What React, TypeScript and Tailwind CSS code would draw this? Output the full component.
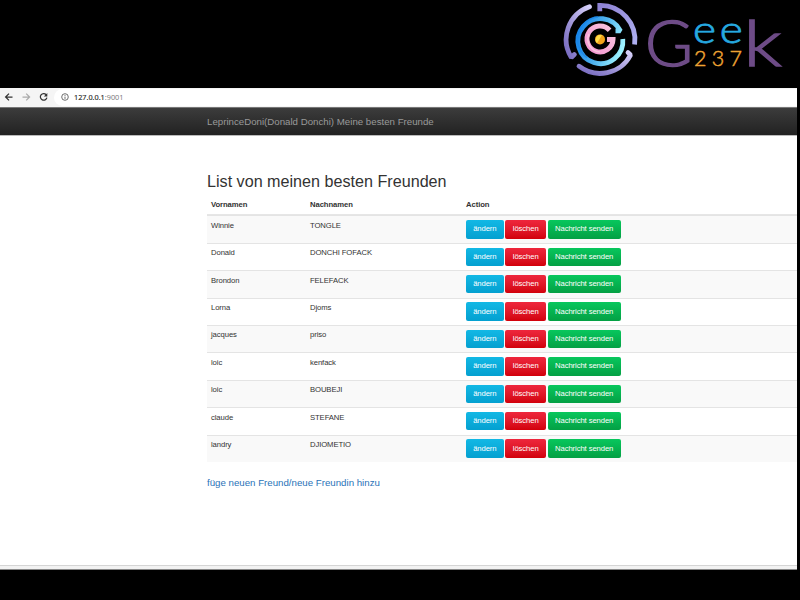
import React from "react";

const friends: [string, string][] = [
  ["Winnie", "TONGLE"],
  ["Donald", "DONCHI FOFACK"],
  ["Brondon", "FELEFACK"],
  ["Lorna", "Djoms"],
  ["jacques", "priso"],
  ["loic", "kenfack"],
  ["loic", "BOUBEJI"],
  ["claude", "STEFANE"],
  ["landry", "DJIOMETIO"],
];

function Emblem() {
  return (
    <svg width="80" height="80" viewBox="560 0 80 80" fill="none" className="shrink-0">
      <defs>
        <linearGradient id="violet" x1="0" y1="1" x2="1" y2="0">
          <stop offset="0" stopColor="#7467bd" />
          <stop offset="1" stopColor="#d6d0fa" />
        </linearGradient>
        <linearGradient id="violetDown" x1="0" y1="0" x2="1" y2="1">
          <stop offset="0" stopColor="#8e82d4" />
          <stop offset="1" stopColor="#aeb0f0" />
        </linearGradient>
        <linearGradient id="cyan" x1="0" y1=".3" x2="1" y2=".6">
          <stop offset="0" stopColor="#1a86e8" />
          <stop offset=".5" stopColor="#4fb2ee" />
          <stop offset="1" stopColor="#9cf2ff" />
        </linearGradient>
        <linearGradient id="pink" x1="0" y1="1" x2="1" y2="0">
          <stop offset="0" stopColor="#f394d0" />
          <stop offset="1" stopColor="#f9c6df" />
        </linearGradient>
      </defs>
      <path d="M589.5 6.8A34.5 34.5 0 0 0 571.3 57.5L574.3 54.6" stroke="url(#violet)" strokeWidth="4.8" strokeLinecap="round" strokeLinejoin="bevel" />
      <path d="M599.8 11.2V5.4A34.5 34.5 0 0 1 634.6 44.5" stroke="url(#violetDown)" strokeWidth="4.8" />
      <path d="M579 66.2A34.5 34.5 0 0 0 630.6 55L628 52.6" stroke="url(#violet)" strokeWidth="4.8" strokeLinecap="round" strokeLinejoin="bevel" />
      <path d="M615.5 30.8H620.4A22.5 22.5 0 1 0 622.8 39" stroke="url(#cyan)" strokeWidth="4.8" strokeLinejoin="bevel" />
      <path d="M598 16.9A22.5 22.5 0 0 0 587 57.6" stroke="#1684ea" strokeWidth="1.6" opacity=".65" />
      <path d="M609.6 30.2A13 13 0 1 0 613 39.4H607" stroke="url(#pink)" strokeWidth="5" />
      <path d="M589 34A12.8 12.8 0 0 0 600 52" stroke="#fac5df" strokeWidth="1.5" />
      <circle cx="600" cy="39.4" r="5" fill="#f3a41b" />
      <path d="M597 43.2A5 5 0 0 1 602 35Z" fill="#ffdc48" />
    </svg>
  );
}

function Wordmark() {
  return (
    <svg width="160" height="80" viewBox="640 0 160 80" className="shrink-0 font-['Lato','Open_Sans',sans-serif]">
      <text x="645" y="65.7" fontSize="62.5" fontWeight="300" textLength="48" lengthAdjust="spacingAndGlyphs" fill="#6e4c87" stroke="#6e4c87" strokeWidth="1.5">G</text>
      <text x="693" y="43.2" fontSize="38" fontWeight="300" textLength="23" lengthAdjust="spacingAndGlyphs" fill="#26a9e0" stroke="#26a9e0" strokeWidth=".8">e</text>
      <text x="719.7" y="43.2" fontSize="38" fontWeight="300" textLength="23" lengthAdjust="spacingAndGlyphs" fill="#26a9e0" stroke="#26a9e0" strokeWidth=".8">e</text>
      <text x="694" y="65.8" fontSize="21.5" fontWeight="300" textLength="48" lengthAdjust="spacing" fill="#eea333" stroke="#eea333" strokeWidth=".5">237</text>
      <text x="743.5" y="65.7" fontSize="62.5" fontWeight="300" textLength="38" lengthAdjust="spacingAndGlyphs" fill="#6e4c87" stroke="#6e4c87" strokeWidth="1.5">k</text>
    </svg>
  );
}

function BrowserBar() {
  return (
    <div className="flex h-[19px] shrink-0 items-center bg-[#f5f5f5]">
      <svg width="54" height="19" viewBox="0 0 54 19" fill="none" stroke="#333" strokeWidth="1.25">
        <path d="M12.5 9H5.8M9 5.6 5.6 9 9 12.4" />
        <path d="M22.5 9h6.7M26.2 5.6 29.6 9l-3.4 3.4" stroke="#aaa" />
        <path d="M46.2 6.8A3.3 3.3 0 1 0 46.9 9.6" />
        <path d="M47.3 5v3.5h-3.5Z" fill="#333" stroke="none" />
      </svg>
      <div className="flex h-[17px] grow items-center rounded-l-full bg-white pl-[7px]">
        <svg width="8" height="8" viewBox="0 0 8 8" fill="none" stroke="#555" strokeWidth=".85" className="-mt-px">
          <circle cx="4" cy="4" r="3.3" />
          <path d="M4 3.6v2.3M4 2v.9" />
        </svg>
        <span className="-mt-[2px] ml-[5px] font-['Open_Sans',sans-serif] text-[7.3px] leading-[10px] text-[#222] [-webkit-text-stroke:0.15px_#222]">
          127.0.0.1<span className="text-[#777] [-webkit-text-stroke:0]">:9001</span>
        </span>
      </div>
    </div>
  );
}

function Actions() {
  const base = "flex h-[18.5px] items-center justify-center rounded-[2px] text-[7.7px] tracking-[-0.1px] text-white";
  return (
    <div className="flex gap-[1.8px] pt-[3.8px]">
      <button className={`${base} w-[37.6px] bg-linear-to-b from-[#12b8e5] to-[#04a0d0]`}>ändern</button>
      <button className={`${base} w-[40.6px] bg-linear-to-b from-[#ee263c] to-[#d20009]`}>löschen</button>
      <button className={`${base} w-[72.8px] bg-linear-to-b from-[#08c75d] to-[#04a044]`}>Nachricht senden</button>
    </div>
  );
}

const columns = "grid grid-cols-[99px_156px_1fr] pl-[4px]";

export default function App() {
  return (
    <div className="flex h-[600px] w-[800px] flex-col overflow-hidden bg-black font-['Liberation_Sans',Arial,sans-serif]">
      <header className="flex h-[88px] shrink-0 pl-[560px]">
        <Emblem />
        <Wordmark />
      </header>
      <main className="flex h-[482px] w-[797px] shrink-0 flex-col bg-white">
        <BrowserBar />
        <nav className="flex h-[29px] shrink-0 items-center border-t border-b border-t-[#777] border-b-[#bbb] bg-linear-to-b from-[#3c3c3c] to-[#222] pl-[207px]">
          <span className="pt-px text-[9.7px] leading-[12px] text-[#999]">LeprinceDoni(Donald Donchi) Meine besten Freunde</span>
        </nav>
        <section className="ml-[207px] flex grow flex-col text-[#333]">
          <h1 className="mt-[35px] h-[23px] text-[16.15px] leading-[20px]">List von meinen besten Freunden</h1>
          <div className={`${columns} h-[21.3px] border-b border-[#e6e6e6] text-[7.7px] leading-[10px] font-bold tracking-[-0.08px]`}>
            <span className="pt-[6px]">Vornamen</span>
            <span className="pt-[6px]">Nachnamen</span>
            <span className="pt-[6px]">Action</span>
          </div>
          {friends.map(([first, last], i) => (
            <div key={i} className={`${columns} h-[27.42px] border-t border-[#e4e4e4] text-[7.7px] leading-[10px] tracking-[-0.1px] ${i % 2 ? "bg-white" : "bg-[#f9f9f9]"}`}>
              <span className="pt-[4.5px]">{first}</span>
              <span className="pt-[4.5px]">{last}</span>
              <Actions />
            </div>
          ))}
          <a className="mt-[15.3px] text-[9.7px] leading-[12px] text-[#2a73b8]">füge neuen Freund/neue Freundin hinzu</a>
        </section>
        <footer className="h-[5px] shrink-0 border-t border-b border-t-[#d5d5d5] border-b-[#888] bg-[#f2f2f2]" />
      </main>
    </div>
  );
}
